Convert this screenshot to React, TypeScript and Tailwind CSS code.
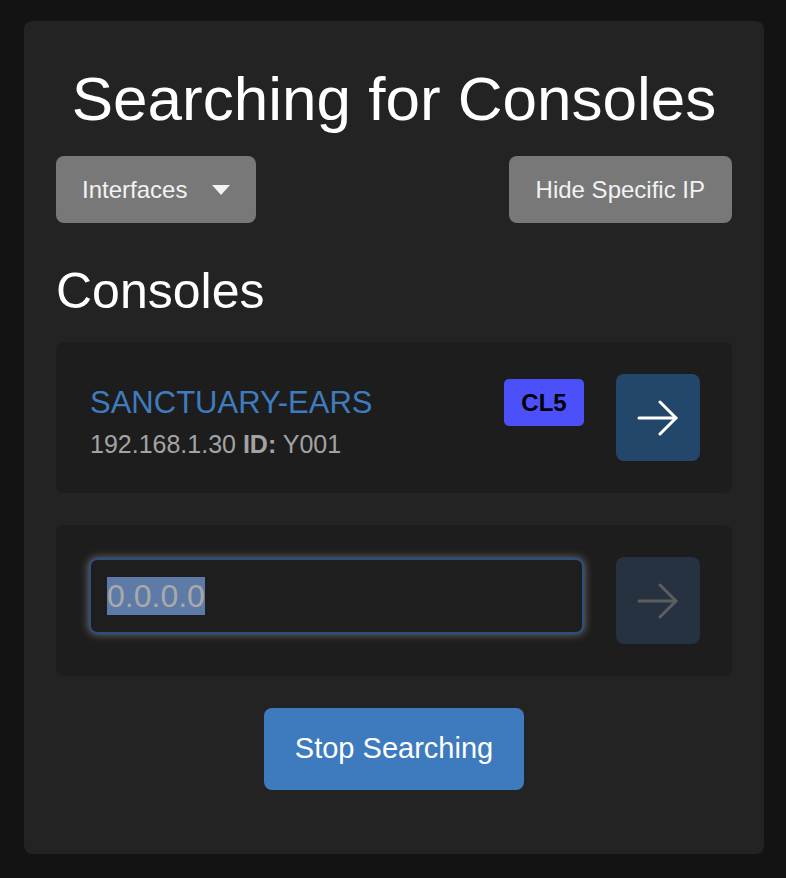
import React from "react"

const font = { fontFamily: '"Liberation Sans", Arial, Helvetica, sans-serif' }

function Arrow({ className }: { className: string }) {
  return (
    <svg width="42" height="36" viewBox="0 0 42 36" fill="none" className={className}>
      <path d="M2 18 H39" stroke="currentColor" strokeWidth="3" strokeLinecap="round" />
      <path d="M23 2 L39 18 L23 34" stroke="currentColor" strokeWidth="3" strokeLinecap="round" strokeLinejoin="round" />
    </svg>
  )
}

export default function App() {
  return (
    <div className="min-h-screen bg-[#131313] pt-[21px] pb-[24px]" style={font}>
      <div className="w-[740px] ml-[24px] rounded-lg bg-[#232323] px-[32px] pt-[42px] pb-[64px]">
        <h1 className="text-center text-[62px] leading-[71px] text-white">Searching for Consoles</h1>

        <div className="mt-[22px] flex justify-between">
          <button className="flex h-[67px] w-[200px] items-center rounded-lg bg-[#787878] pl-[26px] text-[24px] text-[#f2f2f2]">
            Interfaces
            <svg width="18" height="10" viewBox="0 0 18 10" className="ml-[25px]">
              <path d="M0 0 H18 L9 10 Z" fill="#f2f2f2" />
            </svg>
          </button>
          <button className="h-[67px] rounded-lg bg-[#787878] px-[27px] text-[24px] text-[#f2f2f2]">
            Hide Specific IP
          </button>
        </div>

        <h2 className="mt-[40px] text-[50px] leading-[56px] text-white">Consoles</h2>

        <div className="mt-[23px] flex items-start rounded-lg bg-[#1d1d1d] py-[32px] pl-[34px] pr-[32px]">
          <div className="flex-1 pt-[11px]">
            <div className="text-[31px] leading-[35px] text-[#3f7cbf]">SANCTUARY-EARS</div>
            <div className="mt-[10px] text-[25px] leading-[29px] text-[#a3a3a3]">
              192.168.1.30 <span className="font-bold">ID:</span> Y001
            </div>
          </div>
          <div className="mt-[5px] flex h-[47px] w-[80px] items-center justify-center rounded-[5px] bg-[#4b50fb] text-[24px] font-bold text-black">
            CL5
          </div>
          <button className="ml-[32px] flex h-[87px] w-[84px] items-center justify-center rounded-lg bg-[#23466b]">
            <Arrow className="text-white" />
          </button>
        </div>

        <div className="mt-[32px] flex items-start rounded-lg bg-[#1d1d1d] py-[32px] pl-[33px] pr-[32px]">
          <div className="mt-[1px] flex h-[76px] flex-1 items-center rounded-lg border-2 border-[#2c4f80] bg-[#1e1e1e] pl-[16px] shadow-[0_0_10px_rgba(255,255,255,0.4)]">
            <span className="bg-[#5d7ba6] text-[32px] leading-[38px] text-[#a9a9a9]">0.0.0.0</span>
          </div>
          <button className="ml-[32px] flex h-[87px] w-[84px] items-center justify-center rounded-lg bg-[#263240]">
            <Arrow className="text-[#5e5e5e]" />
          </button>
        </div>

        <div className="mt-[32px] flex justify-center">
          <button className="h-[82px] w-[260px] rounded-lg bg-[#3e7bbe] text-[29px] text-white">
            Stop Searching
          </button>
        </div>
      </div>
    </div>
  )
}
